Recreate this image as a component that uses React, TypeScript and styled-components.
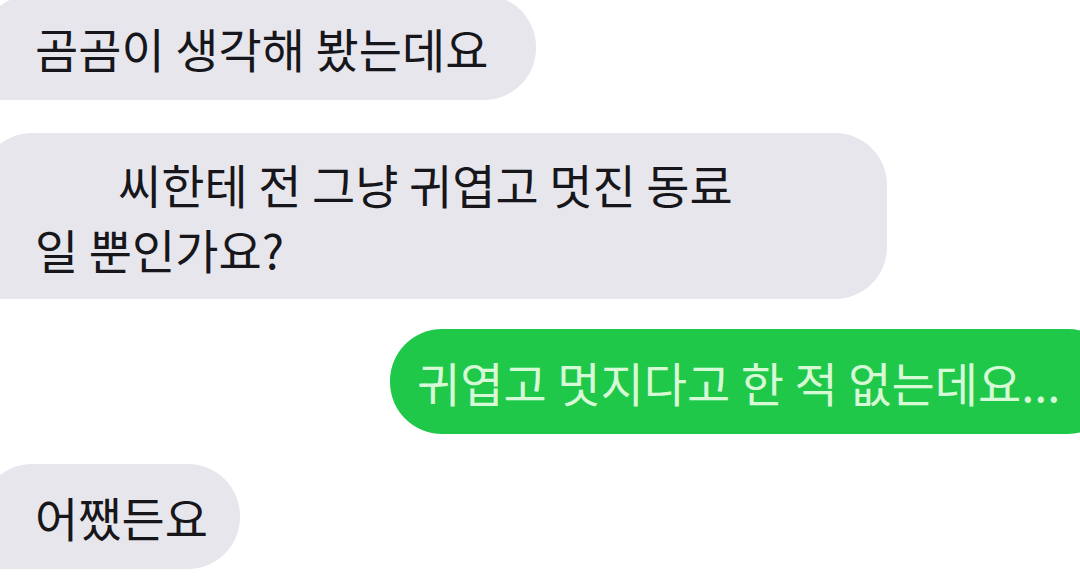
import React from "react";
import styled, { createGlobalStyle } from "styled-components";

type Message = {
  from: "them" | "me";
  lines: string[];
  indent?: number;
  width?: number;
};

const messages: Message[] = [
  { from: "them", lines: ["곰곰이 생각해 봤는데요"] },
  {
    from: "them",
    lines: ["씨한테 전 그냥 귀엽고 멋진 동료", "일 뿐인가요?"],
    indent: 83,
    width: 907,
  },
  { from: "me", lines: ["귀엽고 멋지다고 한 적 없는데요..."], width: 730 },
  { from: "them", lines: ["어쨌든요"], width: 260 },
];

const GlobalStyle = createGlobalStyle`
  html, body {
    margin: 0;
    padding: 0;
    background: #ffffff;
    overflow: hidden;
  }
  body {
    font-family: "Noto Sans CJK KR", "Noto Sans", sans-serif;
  }
`;

const Thread = styled.div`
  width: 1080px;
  height: 591px;
  display: flex;
  flex-direction: column;
  gap: 30px;
  margin-top: -5px;
  overflow: hidden;
  background: #fff;
`;

const Row = styled.div<{ $me: boolean }>`
  display: flex;
  justify-content: ${(p) => (p.$me ? "flex-end" : "flex-start")};
  margin-left: ${(p) => (p.$me ? "0" : "-20px")};
  margin-right: ${(p) => (p.$me ? "-40px" : "0")};

  &:nth-child(2) {
    margin-top: 3px;
  }
`;

const Bubble = styled.div<{ $me: boolean; $width?: number }>`
  position: relative;
  box-sizing: border-box;
  flex: none;
  width: ${(p) => (p.$width ? `${p.$width}px` : "auto")};
  min-height: 105px;
  padding: ${(p) => (p.$me ? "20px 0 20px 27px" : "18px 48px 18px 55px")};
  border-radius: 52px;
  border-bottom-left-radius: ${(p) => (p.$me ? "52px" : "18px")};
  background: ${(p) => (p.$me ? "#20c849" : "#e7e6ed")};
  color: ${(p) => (p.$me ? "#d6f9d6" : "#17171b")};
  font-size: 47px;
  line-height: 65px;
  white-space: nowrap;
  display: flex;
  flex-direction: column;
  justify-content: center;
`;

const Line = styled.span<{ $indent?: number }>`
  display: block;
  padding-left: ${(p) => (p.$indent ? `${p.$indent}px` : "0")};
`;

export default function App() {
  return (
    <>
      <GlobalStyle />
      <Thread>
        {messages.map((m, i) => (
          <Row key={i} $me={m.from === "me"}>
            <Bubble $me={m.from === "me"} $width={m.width}>
              {m.lines.map((line, j) => (
                <Line key={j} $indent={j === 0 ? m.indent : undefined}>
                  {line}
                </Line>
              ))}
            </Bubble>
          </Row>
        ))}
      </Thread>
    </>
  );
}
